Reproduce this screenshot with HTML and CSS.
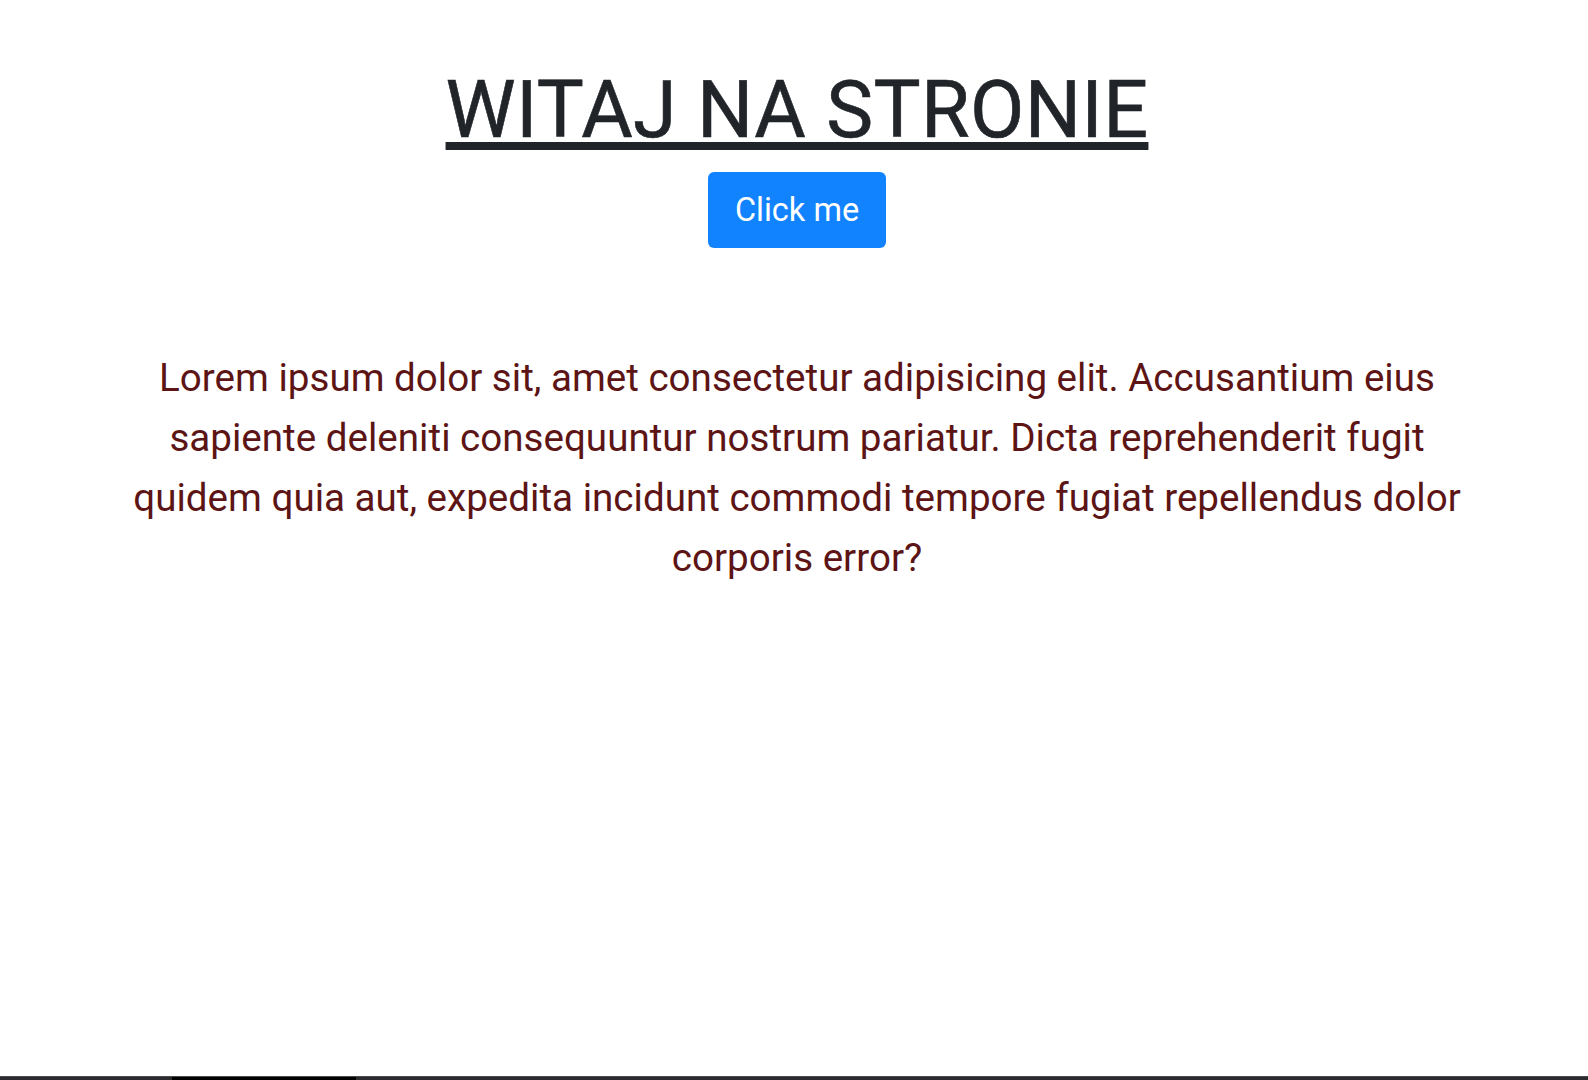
FILE: index.html
```html
<!DOCTYPE html>
<html lang="pl">
<head>
<meta charset="utf-8">
<title>Witaj na stronie</title>
<link rel="stylesheet" href="styles.css">
</head>
<body>
<main class="page">
  <h1 class="title">WITAJ NA STRONIE</h1>
  <button class="btn">Click me</button>
  <p class="lead">Lorem ipsum dolor sit, amet consectetur adipisicing elit. Accusantium eius sapiente deleniti consequuntur nostrum pariatur. Dicta reprehenderit fugit quidem quia aut, expedita incidunt commodi tempore fugiat repellendus dolor corporis error?</p>
</main>
<div class="bottombar"><span class="bottombar-seg"></span></div>
</body>
</html>
```
FILE: styles.css
```css
html, body {
  margin: 0;
  padding: 0;
}
body {
  min-height: 100vh;
  display: flex;
  flex-direction: column;
  background: #ffffff;
  font-family: Roboto, "Liberation Sans", Arial, sans-serif;
}
.page {
  display: flex;
  flex-direction: column;
  align-items: center;
  padding-top: 63px;
  padding-left: 6px;
}
.title {
  margin: 0;
  font-size: 79px;
  line-height: 1.2;
  font-weight: 400;
  letter-spacing: 0.35px;
  color: #212529;
  -webkit-text-stroke: 0.6px #212529;
  text-decoration: underline;
  text-decoration-thickness: 8px;
  text-underline-offset: 5px;
}
.btn {
  margin-top: 14px;
  font-family: inherit;
  font-size: 32.5px;
  line-height: 48px;
  padding: 14px 27px;
  border: none;
  border-radius: 6px;
  background: #1283ff;
  color: #ffffff;
}
.lead {
  margin: 100px 0 0;
  max-width: 1360px;
  font-size: 38.6px;
  line-height: 60px;
  color: #5c1415;
  text-align: center;
}
.bottombar {
  margin-top: auto;
  height: 4px;
  border-top: 1px solid #4a4a4a;
  background: #2c2c30;
  box-sizing: border-box;
}
.bottombar-seg {
  display: block;
  margin-left: 172px;
  width: 184px;
  height: 3px;
  background: #000000;
}
```
